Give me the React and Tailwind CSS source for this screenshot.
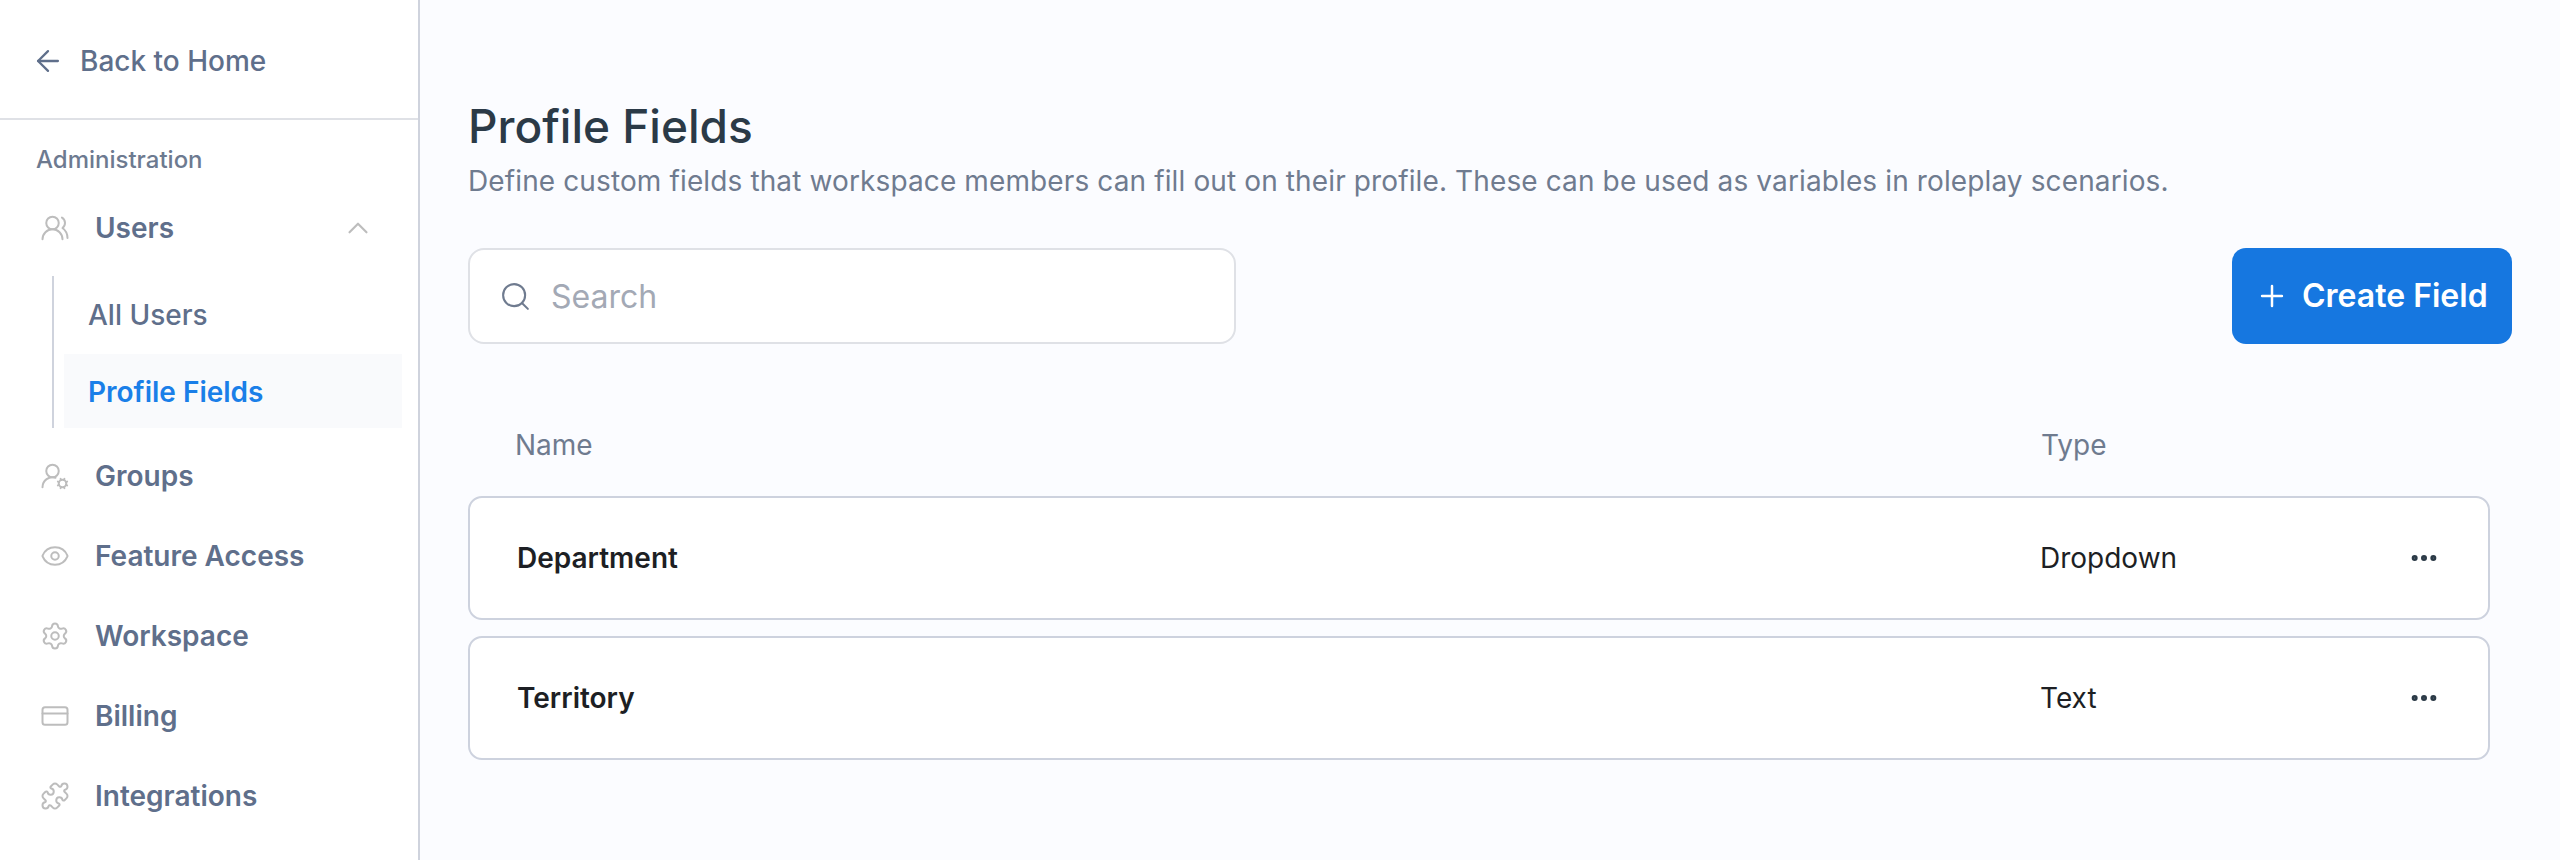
import { ArrowLeft, ChevronUp, CreditCard, Ellipsis, Eye, Plus, Puzzle, Search, Settings, UserRoundCog, UsersRound } from "lucide-react";

const navItems = [
  { label: "Groups", icon: UserRoundCog },
  { label: "Feature Access", icon: Eye },
  { label: "Workspace", icon: Settings },
  { label: "Billing", icon: CreditCard },
  { label: "Integrations", icon: Puzzle },
];

const fields = [
  { name: "Department", type: "Dropdown" },
  { name: "Territory", type: "Text" },
];

const NavItem = ({ label, icon: Icon }) => (
  <div className="flex h-[80px] items-center pl-[40px]">
    <Icon size={30} strokeWidth={1.6} className="text-[#bdbdbd]" />
    <span className="ml-[25px] text-[28px] font-semibold text-[#5f6f8b]">{label}</span>
  </div>
);

const Sidebar = () => (
  <aside className="w-[420px] shrink-0 border-r-2 border-[#cfd3dd] bg-white">
    <div className="flex h-[120px] items-center border-b-2 border-[#dfe1e6] pt-[4px] pl-[31px]">
      <ArrowLeft size={34} strokeWidth={1.6} className="text-[#5f6f8b]" />
      <span className="ml-[15px] text-[28px] font-medium text-[#5f6f8b]">Back to Home</span>
    </div>
    <div className="pt-[24px] pl-[36px] text-[24px] leading-[32px] font-medium text-[#6d7a90]">Administration</div>
    <div className="mt-[19px] flex h-[66px] items-center pr-[43px] pl-[40px]">
      <UsersRound size={30} strokeWidth={1.6} className="text-[#bdbdbd]" />
      <span className="ml-[25px] flex-1 text-[28px] font-semibold text-[#5f6f8b]">Users</span>
      <ChevronUp size={34} strokeWidth={1.5} className="text-[#bdbdbd]" />
    </div>
    <div className="mt-[15px] mr-[16px] ml-[52px] flex h-[152px] flex-col border-l-2 border-[#cfd3dd] pl-[10px]">
      <div className="flex h-[78px] items-center pl-[24px] text-[28px] font-medium text-[#5f6f8b]">All Users</div>
      <div className="flex h-[74px] items-center bg-[#f9fafc] pt-[2px] pl-[24px] text-[28px] font-semibold text-[#1a7fe8]">Profile Fields</div>
    </div>
    <div className="pt-[8px]">
      {navItems.map((item) => (
        <NavItem key={item.label} {...item} />
      ))}
    </div>
  </aside>
);

const App = () => (
  <div className="flex h-[860px] w-[2560px] overflow-hidden bg-[#fbfcff] font-['Inter',sans-serif]">
    <Sidebar />
    <main className="flex-1 pt-[97px] pr-[48px] pl-[48px]">
      <h1 className="text-[46px] leading-[58px] font-medium text-[#2b3a47]">Profile Fields</h1>
      <p className="mt-[8px] text-[28px] leading-[36px] tracking-[0.12px] text-[#6f7b8f]">
        Define custom fields that workspace members can fill out on their profile. These can be used as variables in roleplay scenarios.
      </p>

      <div className="mt-[49px] flex items-center justify-between">
        <div className="flex h-[96px] w-[768px] items-center rounded-[16px] border-2 border-[#dfe1e6] bg-white pl-[29px]">
          <Search size={33} strokeWidth={1.5} className="text-[#6f7b8f]" />
          <span className="ml-[19px] pt-[2px] text-[32px] text-[#a3a9b5]">Search</span>
        </div>
        <button className="flex h-[96px] w-[280px] items-center gap-[13px] rounded-[14px] bg-[#1677e0] pl-[23px] text-[32px] font-semibold text-white">
          <Plus size={34} strokeWidth={1.75} />
          Create Field
        </button>
      </div>

      <div className="mt-[76px] pr-[22px]">
        <div className="flex h-[50px] items-center text-[28px] text-[#6f7b8f]">
          <span className="ml-[47px] w-[1526px]">Name</span>
          <span>Type</span>
        </div>
        <div className="mt-[26px] flex flex-col gap-[16px]">
          {fields.map((field) => (
            <div key={field.name} className="flex h-[124px] items-center rounded-[14px] border-2 border-[#cdd2de] bg-white pr-[48px] pl-[47px] text-[28px] text-[#1d1f24]">
              <span className="w-[1523px] font-semibold">{field.name}</span>
              <span className="flex-1">{field.type}</span>
              <Ellipsis size={32} strokeWidth={2.5} className="text-[#2b3a47]" />
            </div>
          ))}
        </div>
      </div>
    </main>
  </div>
);

export default App;
